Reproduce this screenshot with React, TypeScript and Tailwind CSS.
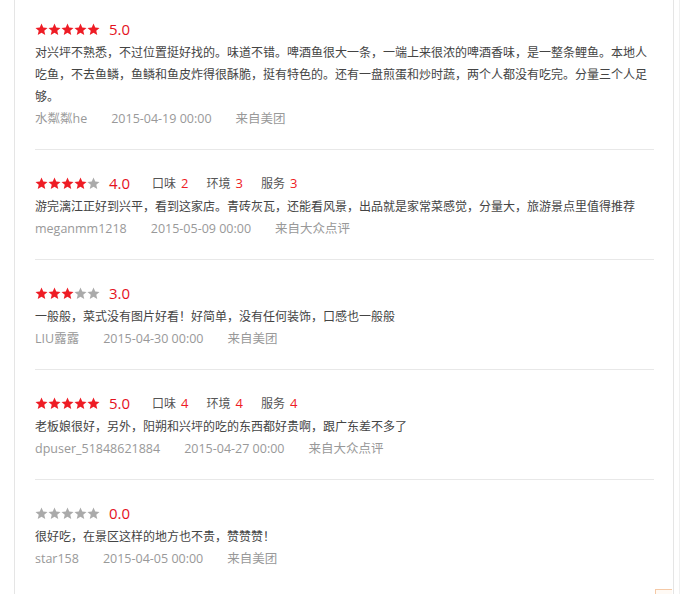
import React from "react";

type Review = {
    score: number;
    sub?: { taste: number; env: number; service: number };
    text: string;
    user: string;
    date: string;
    source: string;
};

const reviews: Review[] = [
    {
        score: 5,
        text: "对兴坪不熟悉，不过位置挺好找的。味道不错。啤酒鱼很大一条，一端上来很浓的啤酒香味，是一整条鲤鱼。本地人吃鱼，不去鱼鳞，鱼鳞和鱼皮炸得很酥脆，挺有特色的。还有一盘煎蛋和炒时蔬，两个人都没有吃完。分量三个人足够。",
        user: "水粼粼he",
        date: "2015-04-19 00:00",
        source: "来自美团",
    },
    {
        score: 4,
        sub: { taste: 2, env: 3, service: 3 },
        text: "游完漓江正好到兴平，看到这家店。青砖灰瓦，还能看风景，出品就是家常菜感觉，分量大，旅游景点里值得推荐",
        user: "meganmm1218",
        date: "2015-05-09 00:00",
        source: "来自大众点评",
    },
    {
        score: 3,
        text: "一般般，菜式没有图片好看！好简单，没有任何装饰，口感也一般般",
        user: "LIU露露",
        date: "2015-04-30 00:00",
        source: "来自美团",
    },
    {
        score: 5,
        sub: { taste: 4, env: 4, service: 4 },
        text: "老板娘很好，另外，阳朔和兴坪的吃的东西都好贵啊，跟广东差不多了",
        user: "dpuser_51848621884",
        date: "2015-04-27 00:00",
        source: "来自大众点评",
    },
    {
        score: 0,
        text: "很好吃，在景区这样的地方也不贵，赞赞赞！",
        user: "star158",
        date: "2015-04-05 00:00",
        source: "来自美团",
    },
];

function Star({ on }: { on: boolean }) {
    return (
        <svg width="13" height="13" viewBox="0 0 24 24" className={on ? "fill-[#ee1c25]" : "fill-[#aaaaaa]"}>
            <path d="M12 1l3.2 7.3 7.9.7-6 5.2 1.8 7.8L12 18 5.1 22l1.8-7.8-6-5.2 7.9-.7z" />
        </svg>
    );
}

function SubScore({ label, value }: { label: string; value: number }) {
    return (
        <span className="mr-[18px] text-[12px] text-[#555]">
            {label}
            <span className="ml-[5px] text-[13px] text-[#ee1c25]">{value}</span>
        </span>
    );
}

function ReviewItem({ review, first }: { review: Review; first: boolean }) {
    return (
        <div className={`border-b border-[#e8e8e8] ${first ? "pt-[17px]" : "pt-[21px]"} pb-[19px] last:border-b-0`}>
            <div className="flex h-[25px] items-center">
                <div className="flex">
                    {[1, 2, 3, 4, 5].map((i) => (
                        <Star key={i} on={i <= review.score} />
                    ))}
                </div>
                <span className="ml-[9px] text-[15px] leading-none text-[#e4121e]">{review.score.toFixed(1)}</span>
                {review.sub && (
                    <div className="ml-[22px] flex items-center">
                        <SubScore label="口味" value={review.sub.taste} />
                        <SubScore label="环境" value={review.sub.env} />
                        <SubScore label="服务" value={review.sub.service} />
                    </div>
                )}
            </div>
            <p className="text-[12px] leading-[22px] text-[#444]">{review.text}</p>
            <div className="flex text-[12.5px] leading-[22px] text-[#999]">
                <span className="mr-[24px]">{review.user}</span>
                <span className="mr-[24px]">{review.date}</span>
                <span>{review.source}</span>
            </div>
        </div>
    );
}

export default function App() {
    return (
        <div
            className="relative h-[594px] overflow-hidden bg-white"
            style={{ fontFamily: '"Open Sans", "Noto Sans CJK SC", sans-serif' }}
        >
            <div className="ml-[14px] h-full w-[660px] border-x border-[#e5e5e5] pl-[20px] pr-[19px]">
                {reviews.map((r, i) => (
                    <ReviewItem key={i} review={r} first={i === 0} />
                ))}
            </div>
            <div className="absolute top-0 left-[679px] h-full w-px bg-[#f0f0f0]" />
            <div className="absolute left-[655px] top-[589px] h-[10px] w-[17px] border-t border-l border-[#f5c9a6] bg-[#fffaf5]" />
        </div>
    );
}
